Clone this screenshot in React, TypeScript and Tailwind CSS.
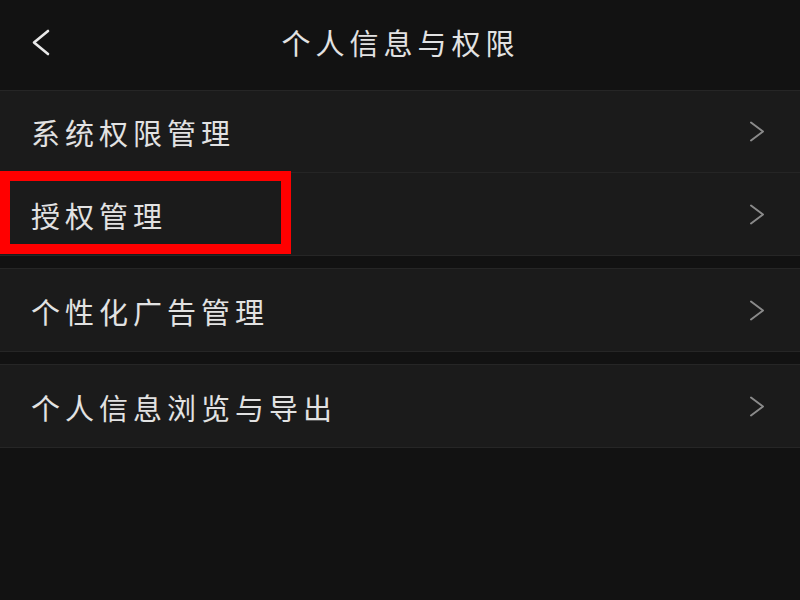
const groups: string[][] = [
  ["系统权限管理", "授权管理"],
  ["个性化广告管理"],
  ["个人信息浏览与导出"],
];

function Chevron() {
  return (
    <svg width="16" height="21" viewBox="0 0 16 21" fill="none" className="mr-[3px]">
      <polyline points="2,1.5 14,10.5 2,19.5" stroke="#8a8a8a" strokeWidth="2" strokeLinecap="round" strokeLinejoin="round" />
    </svg>
  );
}

function Row({ label, last, highlight }: { label: string; last: boolean; highlight?: boolean }) {
  return (
    <div
      className={
        "relative flex items-center justify-between h-[82px] pl-[31px] pr-[32px] bg-[#1b1b1b] " +
        (last ? "" : "border-b border-[#252525]")
      }
    >
      <span className="text-[29px] tracking-[5px] text-[#e2e2e2] leading-none mt-[2px]">{label}</span>
      <Chevron />
      {highlight && (
        <div className="absolute left-0 top-[-2px] w-[291px] h-[83px] border-[10px] border-[#ff0000]" />
      )}
    </div>
  );
}

export default function App() {
  return (
    <div
      className="w-[800px] h-[600px] bg-[#121212] overflow-hidden"
      style={{ fontFamily: '"Noto Sans CJK SC", "Noto Sans", sans-serif' }}
    >
      <div className="relative h-[90px] flex items-center justify-center">
        <svg width="24" height="30" viewBox="0 0 24 30" fill="none" className="absolute left-[29px] top-[28px]">
          <polyline points="19,3 5,14.5 19,26" stroke="#e8e8e8" strokeWidth="2.6" strokeLinecap="round" strokeLinejoin="round" />
        </svg>
        <span className="text-[29px] tracking-[5px] text-[#e2e2e2] leading-none mt-[-5px] ml-[1px]">
          个人信息与权限
        </span>
      </div>
      <div className="flex flex-col gap-[12px]">
        {groups.map((g, gi) => (
          <div key={gi} className="border-t border-b border-[#262626]">
            {g.map((label, i) => (
              <Row key={label} label={label} last={i === g.length - 1} highlight={label === "授权管理"} />
            ))}
          </div>
        ))}
      </div>
    </div>
  );
}
